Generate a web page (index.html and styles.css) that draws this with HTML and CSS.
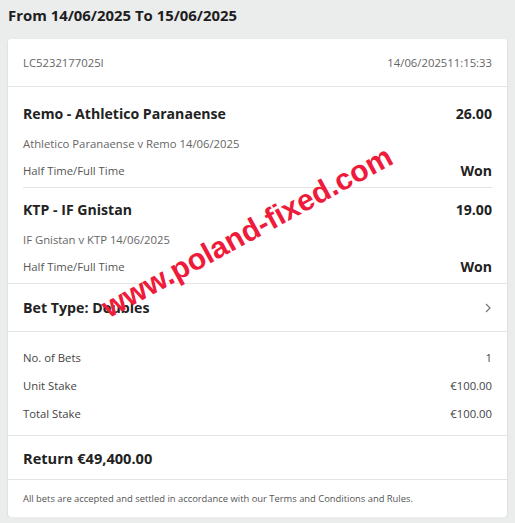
FILE: index.html
```html
<!DOCTYPE html>
<html lang="en">
<head>
  <meta charset="UTF-8" />
  <title>Bet History</title>
  <link rel="stylesheet" href="styles.css">
</head>
<body>
  <h1 class="range">From 14/06/2025 To 15/06/2025</h1>

  <div class="card">
    <div class="row head">
      <span>LC5232177025I</span>
      <span>14/06/202511:15:33</span>
    </div>

    <div class="legs">
      <div class="leg first">
        <div class="line title">
          <span>Remo - Athletico Paranaense</span>
          <span>26.00</span>
        </div>
        <div class="line sub">Athletico Paranaense v Remo 14/06/2025</div>
        <div class="line market">
          <span>Half Time/Full Time</span>
          <strong>Won</strong>
        </div>
      </div>
      <div class="leg">
        <div class="line title">
          <span>KTP - IF Gnistan</span>
          <span>19.00</span>
        </div>
        <div class="line sub">IF Gnistan v KTP 14/06/2025</div>
        <div class="line market">
          <span>Half Time/Full Time</span>
          <strong>Won</strong>
        </div>
      </div>
    </div>

    <div class="row bet_type">
      <span>Bet Type: Doubles</span>
      <svg width="8" height="12" viewBox="0 0 8 12"><path d="M2 2 L6 6 L2 10" fill="none" stroke="#777" stroke-width="1.2"/></svg>
    </div>

    <div class="stakes">
      <div class="line"><span>No. of Bets</span><span>1</span></div>
      <div class="line"><span>Unit Stake</span><span>€100.00</span></div>
      <div class="line"><span>Total Stake</span><span>€100.00</span></div>
    </div>

    <div class="row total">Return €49,400.00</div>

    <div class="row terms">All bets are accepted and settled in accordance with our Terms and Conditions and Rules.</div>

    <div class="watermark">www.poland-fixed.com</div>
  </div>
</body>
</html>
```

FILE: styles.css
```css
body {
  margin: 0;
  padding: 0 8px;
  background: #ebecec;
  font-family: "Open Sans", "Noto Sans", sans-serif;
  color: #222;
}

.range {
  margin: 0;
  height: 39px;
  line-height: 30px;
  font-size: 14.9px;
  font-weight: bold;
  color: #1e1e1e;
}

.card {
  position: relative;
  overflow: hidden;
  background: #fff;
  border-radius: 3px;
  box-shadow: 0 1px 2px rgba(0,0,0,0.15);
}

.row {
  display: flex;
  align-items: center;
  justify-content: space-between;
  padding: 0 15px;
  border-bottom: 1px solid #e4e4e4;
}

.row.head {
  height: 47px;
  font-size: 11.3px;
  color: #666;
}

.legs {
  padding: 0 15px;
  border-bottom: 1px solid #e4e4e4;
}

.leg {
  padding: 11px 0 7px;
  border-bottom: 1px solid #e4e4e4;
}

.leg.first {
  padding-top: 16px;
}

.leg:last-child {
  border-bottom: none;
}

.line {
  display: flex;
  justify-content: space-between;
  align-items: center;
}

.line.title {
  height: 20px;
  font-size: 14.1px;
  font-weight: bold;
  margin-bottom: 11px;
}

.line.sub {
  height: 18px;
  font-size: 11.3px;
  color: #666;
  margin-bottom: 8px;
}

.line.market {
  height: 20px;
  font-size: 11.3px;
  color: #555;
}

.line.market strong {
  font-size: 14.1px;
  color: #222;
}

.row.bet_type {
  height: 47px;
  font-size: 14.2px;
  font-weight: bold;
}

.stakes {
  padding: 11px 15px 8px;
  border-bottom: 1px solid #e4e4e4;
}

.stakes .line {
  height: 28px;
  font-size: 11.3px;
  color: #444;
}

.row.total {
  height: 43px;
  font-size: 14.6px;
  font-weight: bold;
}

.row.terms {
  height: 37px;
  font-size: 9.4px;
  color: #555;
  border-bottom: none;
}

.watermark {
  position: absolute;
  left: 239px;
  top: 193px;
  transform: translate(-50%, -50%) rotate(-28.5deg);
  font-family: "Liberation Sans", Arial, sans-serif;
  font-weight: bold;
  font-size: 30px;
  color: #ee1b3b;
  white-space: nowrap;
  pointer-events: none;
}
```
